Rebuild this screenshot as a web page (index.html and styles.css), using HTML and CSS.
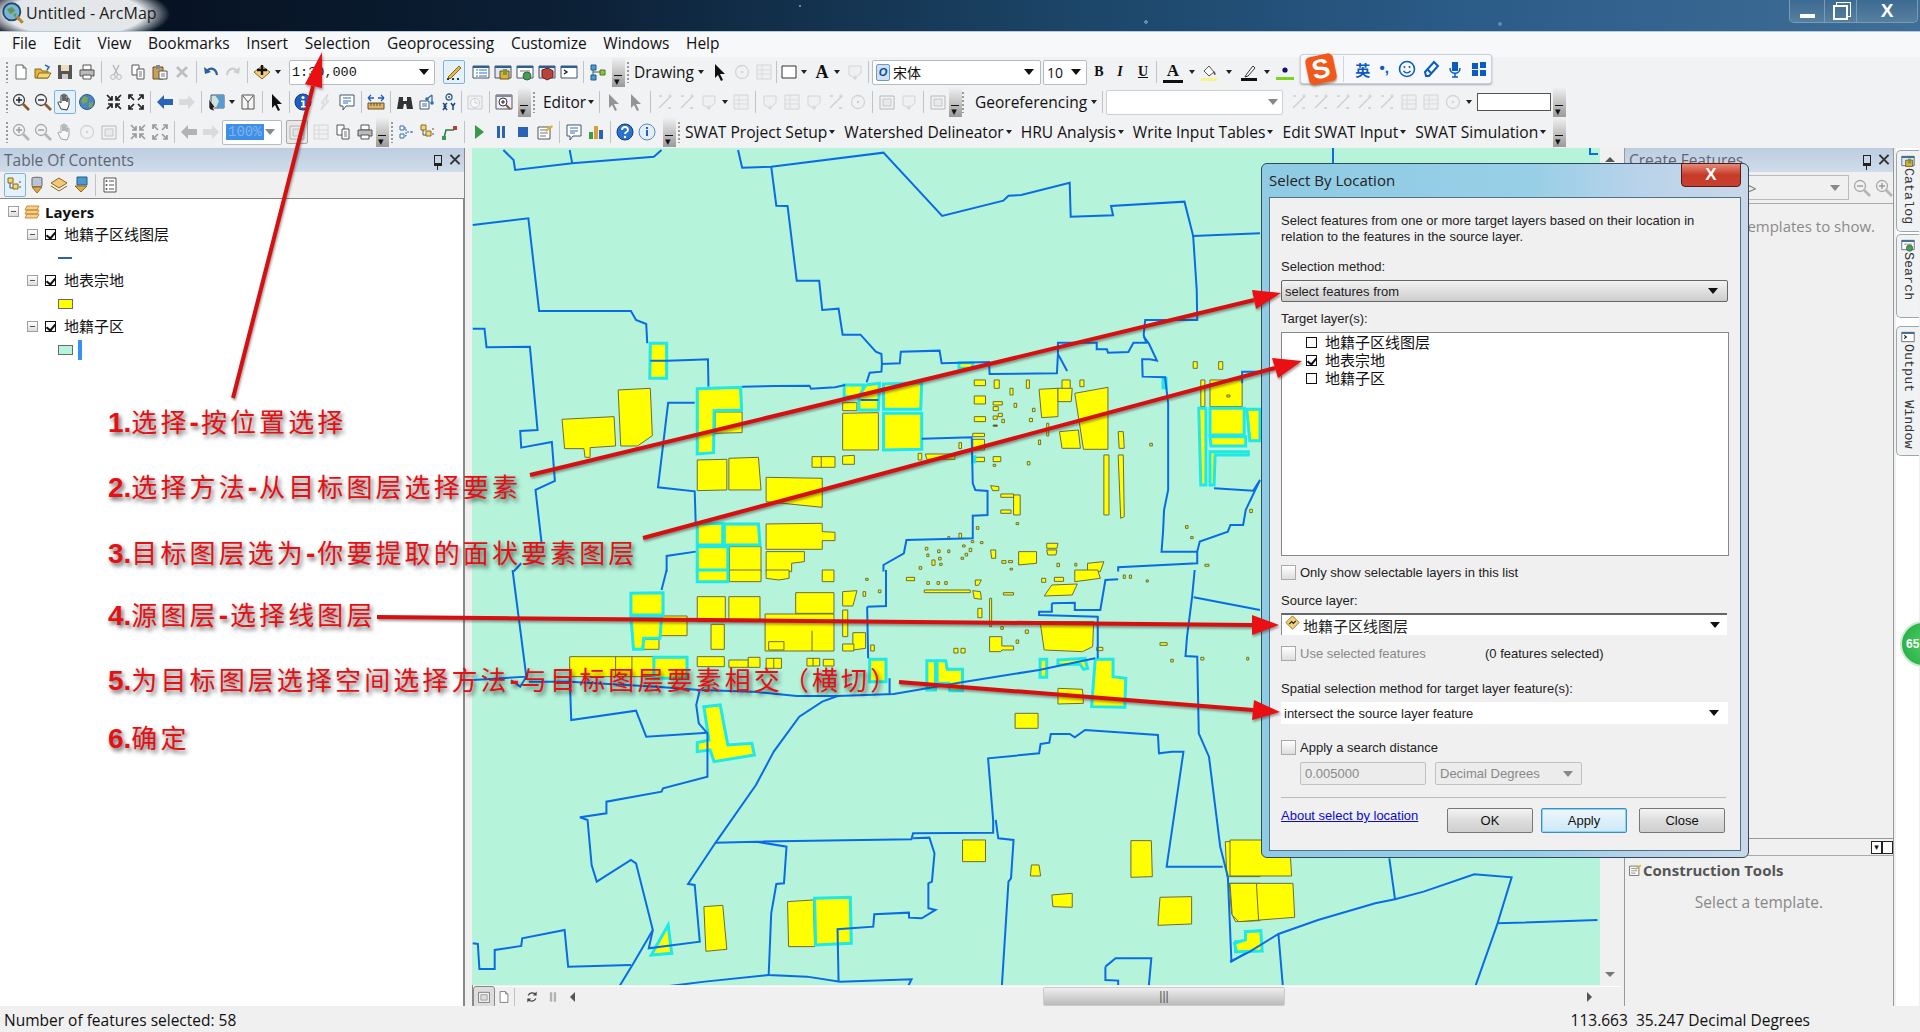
FILE: index.html
```html
<!DOCTYPE html>
<html lang="zh-CN">
<head>
  <meta charset="UTF-8">
  <title>Untitled - ArcMap</title>
  <link rel="stylesheet" href="styles.css">
</head>
<body>
  <svg class="defs" width="0" height="0">
    <symbol id="new" viewBox="0 0 18 18"><path d="M4 2h7l3 3v11H4z" fill="#fff" stroke="#666"/><path d="M11 2v3h3" fill="#ddd" stroke="#666"/></symbol>
    <symbol id="open" viewBox="0 0 18 18"><path d="M1 6h6l1 2h6v7H1z" fill="#e2b53c" stroke="#8a6a1c"/><path d="M3 15l2-5h12l-3 5z" fill="#f6d873" stroke="#8a6a1c"/><path d="M11 2l4 2-2 3" fill="none" stroke="#2d6fb8" stroke-width="1.5"/></symbol>
    <symbol id="save" viewBox="0 0 18 18"><path d="M2 2h14v14H2z" fill="#555"/><path d="M5 2h8v6H5z" fill="#eadfb8"/><path d="M6 11h6v5H6z" fill="#ccc"/></symbol>
    <symbol id="print" viewBox="0 0 18 18"><path d="M5 2h8v5H5z" fill="#fff" stroke="#555"/><path d="M2 7h14v6H2z" fill="#bbb" stroke="#555"/><path d="M5 12h8v4H5z" fill="#fff" stroke="#555"/></symbol>
    <symbol id="cut" viewBox="0 0 18 18"><path d="M6 2l5 10M12 2L7 12" stroke="#666" stroke-width="1.4" fill="none"/><circle cx="6" cy="14" r="2.4" fill="none" stroke="#666"/><circle cx="12" cy="14" r="2.4" fill="none" stroke="#666"/></symbol>
    <symbol id="copy" viewBox="0 0 18 18"><path d="M3 2h7v10H3z" fill="#fff" stroke="#555"/><path d="M8 6h7v10H8z" fill="#fff" stroke="#555"/><path d="M10 9h3M10 11h3M10 13h3" stroke="#777"/></symbol>
    <symbol id="paste" viewBox="0 0 18 18"><path d="M2 4h10v12H2z" fill="#c9a05a" stroke="#6d5020"/><path d="M5 2h4v4H5z" fill="#888"/><path d="M8 8h8v8H8z" fill="#fff" stroke="#555"/><path d="M10 11h4M10 13h4" stroke="#777"/></symbol>
    <symbol id="del" viewBox="0 0 18 18"><path d="M4 4l10 10M14 4L4 14" stroke="#777" stroke-width="2.6"/></symbol>
    <symbol id="undo" viewBox="0 0 18 18"><path d="M5 8c3-4 9-3 10 4" fill="none" stroke="#2a5f9e" stroke-width="2.2"/><path d="M2 4l1 7 6-2z" fill="#2a5f9e"/></symbol>
    <symbol id="redo" viewBox="0 0 18 18"><path d="M13 8C10 4 4 5 3 12" fill="none" stroke="#999" stroke-width="2.2"/><path d="M16 4l-1 7-6-2z" fill="#999"/></symbol>
    <symbol id="add" viewBox="0 0 18 18"><path d="M9 3l8 6-8 7-8-7z" fill="#f2cf78" stroke="#8a6a1c"/><path d="M9 2v10M4 7h10" stroke="#111" stroke-width="2.4"/></symbol>
    <symbol id="edit" viewBox="0 0 18 18"><path d="M3 14L14 3l2 2L5 16z" fill="#e8b34a" stroke="#8a6a1c"/><path d="M2 16h14" stroke="#333" stroke-dasharray="2 3" stroke-width="2"/></symbol>
    <symbol id="tbl" viewBox="0 0 18 18"><path d="M1 3h16v12H1z" fill="#fff" stroke="#456"/><path d="M1 3h16v2H1z" fill="#2e5f92"/><path d="M4 7h2M4 10h2M4 13h2M7 7h8M7 10h8M7 13h8" stroke="#2e6fb8"/></symbol>
    <symbol id="catalog" viewBox="0 0 18 18"><path d="M1 3h16v12H1z" fill="#dfe8f2" stroke="#456"/><path d="M1 3h16v2H1z" fill="#2e5f92"/><path d="M6 8h9v8H6z" fill="#d9b23a" stroke="#6d5020"/><path d="M9 6h4v6H9z" fill="#7a9a3a"/></symbol>
    <symbol id="srch" viewBox="0 0 18 18"><path d="M1 3h16v12H1z" fill="#fff" stroke="#456"/><path d="M1 3h16v2H1z" fill="#2e5f92"/><path d="M4 7h10v2H4z" fill="#bbb"/><circle cx="11" cy="13" r="4" fill="#4a9a5a" stroke="#2a6a3a"/></symbol>
    <symbol id="box" viewBox="0 0 18 18"><path d="M1 3h16v12H1z" fill="#dfe8f2" stroke="#456"/><path d="M1 3h16v2H1z" fill="#2e5f92"/><path d="M4 7l6-2 5 3v6l-6 3-5-3z" fill="#b5453a" stroke="#6d201a"/></symbol>
    <symbol id="py" viewBox="0 0 18 18"><path d="M1 3h16v12H1z" fill="#fff" stroke="#456"/><path d="M1 3h16v2H1z" fill="#2e5f92"/><path d="M4 7l3 2-3 2" fill="none" stroke="#111" stroke-width="1.3"/></symbol>
    <symbol id="model" viewBox="0 0 18 18"><path d="M4 5v9M4 9h9" stroke="#456"/><path d="M2 2h5v5H2zM2 12h5v5H2z" fill="#4b9bd6" stroke="#1c5f92"/><path d="M11 7h5v5h-5z" fill="#8fc04a" stroke="#4a7a1c"/></symbol>
    <symbol id="zin" viewBox="0 0 18 18"><circle cx="7" cy="7" r="5.5" fill="#eef3f8" stroke="#444" stroke-width="1.3"/><path d="M4 7h6M7 4v6" stroke="#222" stroke-width="1.4"/><path d="M11 11l6 6" stroke="#8a5a2a" stroke-width="2.6"/></symbol>
    <symbol id="zout" viewBox="0 0 18 18"><circle cx="7" cy="7" r="5.5" fill="#eef3f8" stroke="#444" stroke-width="1.3"/><path d="M4 7h6" stroke="#222" stroke-width="1.4"/><path d="M11 11l6 6" stroke="#8a5a2a" stroke-width="2.6"/></symbol>
    <symbol id="hand" viewBox="0 0 18 18"><path d="M5 16L2 10c0-2 2-1 3 0V3c0-1.400 2-1.400 2 0v5-6c0-1.400 2-1.400 2 0v6-5c0-1.400 2-1.400 2 0v6-3c0-1.400 2-1.400 2 0v6l-2 5z" fill="#fff" stroke="#333"/></symbol>
    <symbol id="globe" viewBox="0 0 18 18"><circle cx="9" cy="9" r="7.5" fill="#4a86c6" stroke="#2a5a8e"/><path d="M6 3l4 2-1 4-4 2-2-3zM11 10l4-1-1 5-3 1z" fill="#7fa84a"/></symbol>
    <symbol id="fin" viewBox="0 0 18 18"><path d="M2 2l5 5M7 3v4H3M16 2l-5 5M11 3v4h4M2 16l5-5M7 15v-4H3M16 16l-5-5M11 15v-4h4" fill="none" stroke="#222" stroke-width="1.7"/></symbol>
    <symbol id="fout" viewBox="0 0 18 18"><path d="M7 7L2 2M2 6V2h4M11 7l5-5M16 6V2h-4M7 11l-5 5M2 12v4h4M11 11l5 5M16 12v4h-4" fill="none" stroke="#222" stroke-width="1.7"/></symbol>
    <symbol id="back" viewBox="0 0 18 18"><path d="M1 9l7-7v4h9v6H8v4z" fill="#2a62b8"/></symbol>
    <symbol id="fwd" viewBox="0 0 18 18"><path d="M17 9l-7-7v4H1v6h9v4z" fill="#b8b8b8"/></symbol>
    <symbol id="sel" viewBox="0 0 18 18"><path d="M4 2h13v13H4z" fill="#cfe4d8" stroke="#456"/><path d="M8 2l4 6-3 7h8V2z" fill="#5a9ad0"/><path d="M2 6l6 8-2 1 2 3-4-1-2-2z" fill="#222" stroke="#fff" stroke-width=".6"/></symbol>
    <symbol id="clr" viewBox="0 0 18 18"><path d="M3 2h12v14H3z" fill="#f4f4f4" stroke="#555"/><path d="M4 3l5 6 5-6M9 9v7" fill="none" stroke="#555"/></symbol>
    <symbol id="arrow" viewBox="0 0 18 18"><path d="M4 1l10 10-5 0 3 6-2 1-3-6-3 3z" fill="#111"/></symbol>
    <symbol id="info" viewBox="0 0 18 18"><circle cx="9" cy="9" r="8" fill="#1f5fc0" stroke="#0e3a80"/><circle cx="9" cy="4.500" r="1.600" fill="#fff"/><path d="M7 7.500h3.500V13H12v1.500H7V13h1.500V9H7z" fill="#fff"/></symbol>
    <symbol id="bolt" viewBox="0 0 18 18"><path d="M12 1L5 10h3l-3 7 8-9h-3z" fill="#ddd" stroke="#aaa"/></symbol>
    <symbol id="popup" viewBox="0 0 18 18"><path d="M2 2h14v11H8l-3 4v-4H2z" fill="#fff" stroke="#456"/><path d="M5 5h8M5 8h8M5 10h5" stroke="#2e6fb8"/></symbol>
    <symbol id="ruler" viewBox="0 0 18 18"><path d="M1 10h16v6H1z" fill="#d9b76a" stroke="#6d5020"/><path d="M4 10v3M7 10v3M10 10v3M13 10v3" stroke="#6d5020"/><path d="M1 5h6M1 5l3-3M1 5l3 3M17 5h-6M17 5l-3-3M17 5l-3 3" fill="none" stroke="#1f5fc0" stroke-width="1.300"/></symbol>
    <symbol id="binoc" viewBox="0 0 18 18"><path d="M3 4h4v4h4V4h4l2 12h-6l-1-5H8l-1 5H1z" fill="#333"/></symbol>
    <symbol id="route" viewBox="0 0 18 18"><path d="M2 8h9v8H2z" fill="#fff" stroke="#456"/><path d="M4 11h5M4 13h5" stroke="#2e6fb8"/><path d="M10 5l4-3M14 2v8" stroke="#2e6fb8" fill="none" stroke-width="1.300"/><circle cx="14" cy="10" r="1.800" fill="#2e6fb8"/><circle cx="9" cy="6" r="1.800" fill="#2e6fb8"/></symbol>
    <symbol id="xy" viewBox="0 0 18 18"><circle cx="9" cy="4" r="3" fill="none" stroke="#2e5f92" stroke-width="1.300"/><circle cx="9" cy="4" r="1" fill="#2e5f92"/><path d="M3 10l3 3-3 4M7 10l-3 3 3 4M11 10l2 3 2-3M13 13v4" fill="none" stroke="#1f4a80" stroke-width="1.500"/></symbol>
    <symbol id="clock" viewBox="0 0 18 18"><path d="M2 3h14v13H2z" fill="#eee" stroke="#999"/><circle cx="9" cy="10" r="4.500" fill="#fff" stroke="#999"/><path d="M9 7v3h3" fill="none" stroke="#999"/></symbol>
    <symbol id="zwin" viewBox="0 0 18 18"><path d="M1 2h16v14H1z" fill="#eef" stroke="#555"/><path d="M1 2h16v2H1z" fill="#889"/><circle cx="8" cy="9" r="4" fill="#fff" stroke="#333"/><path d="M6 9h4M8 7v4" stroke="#222"/><path d="M11 12l4 4" stroke="#8a5a2a" stroke-width="2"/></symbol>
    <symbol id="pts" viewBox="0 0 18 18"><path d="M3 15L15 3M3 3h3M12 15h3" stroke="#999" stroke-width="1.300" fill="none"/><path d="M12 3h4M14 1v4" stroke="#aaa"/></symbol>
    <symbol id="poly" viewBox="0 0 18 18"><path d="M3 3h12v7l-6 5-6-3z" fill="#eee" stroke="#aaa"/><path d="M9 12v5M7 15h4" stroke="#aaa"/></symbol>
    <symbol id="grid" viewBox="0 0 18 18"><path d="M2 2h14v14H2z" fill="#eee" stroke="#aaa"/><path d="M2 7h14M2 11h14M7 2v14" stroke="#bbb"/></symbol>
    <symbol id="doc" viewBox="0 0 18 18"><path d="M2 3h14v13H2z" fill="#f4f4f4" stroke="#666"/><path d="M5 6h8v7H5z" fill="#ddd" stroke="#888"/></symbol>
    <symbol id="rot" viewBox="0 0 18 18"><circle cx="9" cy="9" r="6.500" fill="none" stroke="#aaa" stroke-width="1.300"/><circle cx="9" cy="9" r="1.300" fill="#aaa"/></symbol>
    <symbol id="refresh" viewBox="0 0 18 18"><path d="M14 6a6 6 0 0 0-10 1M4 12a6 6 0 0 0 10-1" fill="none" stroke="#444" stroke-width="1.500"/><path d="M15 2v5h-5zM3 16v-5h5z" fill="#444"/></symbol>
    <symbol id="rect" viewBox="0 0 18 18"><path d="M2 3h14v12H2z" fill="#fff" stroke="#333"/></symbol>
    <symbol id="fill" viewBox="0 0 18 18"><path d="M4 8l5-5 5 6-5 4z" fill="#fff" stroke="#555"/><path d="M14 8c2 2 2 4 1 4s-2-2-1-4z" fill="#6a4a2a"/><path d="M1 15h16v3H1z" fill="#f4f48a"/></symbol>
    <symbol id="pen" viewBox="0 0 18 18"><path d="M6 12l7-9 2 2-7 8-3 1z" fill="#fff" stroke="#333"/><path d="M1 15h16v3H1z" fill="#111"/></symbol>
    <symbol id="lineclr" viewBox="0 0 18 18"><circle cx="9" cy="7" r="2.600" fill="#10106e"/><path d="M0 14h18v3H0z" fill="#7ed321"/></symbol>
    <symbol id="play" viewBox="0 0 18 18"><path d="M5 2l9 7-9 7z" fill="#3a9a4a"/></symbol>
    <symbol id="pause" viewBox="0 0 18 18"><path d="M5 3h3v12H5zM10 3h3v12h-3z" fill="#2a62b8"/></symbol>
    <symbol id="stop" viewBox="0 0 18 18"><path d="M4 4h10v10H4z" fill="#2a62b8"/></symbol>
    <symbol id="form" viewBox="0 0 18 18"><path d="M2 4h12v12H2z" fill="#fff" stroke="#555"/><path d="M4 7h8M4 10h8M4 13h6" stroke="#777"/><path d="M9 7l7-5 1 2-7 5z" fill="#d9b23a"/></symbol>
    <symbol id="bars" viewBox="0 0 18 18"><path d="M2 9h4v7H2z" fill="#3a9a4a"/><path d="M7 3h4v13H7z" fill="#d9a03a"/><path d="M12 7h4v9h-4z" fill="#2a62b8"/></symbol>
    <symbol id="help" viewBox="0 0 18 18"><circle cx="9" cy="9" r="8" fill="#2a72d0" stroke="#0e3a80"/><path d="M6 7c0-4 6-4 6 0 0 2-3 2-3 4" fill="none" stroke="#fff" stroke-width="1.800"/><circle cx="9" cy="14" r="1.200" fill="#fff"/></symbol>
    <symbol id="infol" viewBox="0 0 18 18"><circle cx="9" cy="9" r="8" fill="#e4eef8" stroke="#5a8ac0"/><path d="M8 7h2v6H8zM8 4h2v2H8z" fill="#2a62b8"/></symbol>
    <symbol id="treeh" viewBox="0 0 18 18"><path d="M3 3h4v4H3zM3 11h4v4H3z" fill="#fff" stroke="#2e6fb8"/><path d="M10 9h5M15 8v2M7 5h2v8H7" fill="none" stroke="#2e6fb8" stroke-dasharray="2 1"/></symbol>
    <symbol id="treey" viewBox="0 0 18 18"><path d="M2 2h5v5H2zM7 8h5v5H7z" fill="#f0d878" stroke="#8a6a1c"/><path d="M4 7v5h3M14 5v2M14 10v2" fill="none" stroke="#555"/></symbol>
    <symbol id="lnk" viewBox="0 0 18 18"><path d="M3 15l2-8h8" fill="none" stroke="#2a7a4a" stroke-width="1.500"/><path d="M1 13h4v4H1z" fill="#3a9a4a"/><path d="M12 3h4v4h-4z" fill="#c03a2a"/></symbol>
    <symbol id="tsrc" viewBox="0 0 18 18"><path d="M4 2c0-1 10-1 10 0v8c0 1-10 1-10 0z" fill="#b8c4d0" stroke="#667"/><path d="M4 11h10l-5 6z" fill="#e0a84a" stroke="#8a6a1c"/></symbol>
    <symbol id="tstack" viewBox="0 0 18 18"><path d="M9 2l8 5-8 5-8-5z" fill="#f2c878" stroke="#8a6a1c"/><path d="M1 10l8 5 8-5" fill="none" stroke="#8a6a1c"/></symbol>
    <symbol id="tvis" viewBox="0 0 18 18"><path d="M5 1h10v8H5z" fill="#4a9ad0" stroke="#1c5f92"/><path d="M3 10h12l-6 6z" fill="#e0a84a" stroke="#8a6a1c"/></symbol>
    <symbol id="topt" viewBox="0 0 18 18"><path d="M3 2h12v14H3z" fill="#fff" stroke="#555"/><path d="M8 5h5M8 9h5M8 13h5" stroke="#555"/><circle cx="5.500" cy="5" r="1" fill="#555"/><circle cx="5.500" cy="9" r="1" fill="#555"/><circle cx="5.500" cy="13" r="1" fill="#555"/></symbol>
    <symbol id="layers" viewBox="0 0 18 18"><path d="M4 3h12l-2 4H2zM4 7h12l-2 4H2zM4 11h12l-2 4H2z" fill="#f4d28a" stroke="#c8893a"/></symbol>
  </svg>

  <header class="titlebar">
    <svg class="app-ic" viewBox="0 0 18 18"><circle cx="8" cy="8" r="7" fill="#7db2d8" stroke="#1f4a70" stroke-width="1.500"/><path d="M4 6l4-2 3 3-4 3zM9 10l3-1-1 4z" fill="#5f9a4a"/><path d="M12 12l5 5" stroke="#b8862a" stroke-width="2.500"/></svg>
    <span class="app-title">Untitled - ArcMap</span>
    <div class="winbtns">
      <span class="wb wb-min"></span>
      <span class="wb wb-max"></span>
      <span class="wb wb-close">X</span>
    </div>
  </header>

  <nav class="menu">
    <span>File</span><span>Edit</span><span>View</span><span>Bookmarks</span><span>Insert</span><span>Selection</span><span>Geoprocessing</span><span>Customize</span><span>Windows</span><span>Help</span>
  </nav>

  <!-- toolbars -->
  <div class="tb">
    <section class="seg s-std">
      <i class="grip"></i>
      <svg class="ic"><use href="#new"/></svg><svg class="ic"><use href="#open"/></svg><svg class="ic"><use href="#save"/></svg><svg class="ic"><use href="#print"/></svg>
      <i class="sep"></i>
      <svg class="ic off"><use href="#cut"/></svg><svg class="ic"><use href="#copy"/></svg><svg class="ic"><use href="#paste"/></svg><svg class="ic off"><use href="#del"/></svg>
      <i class="sep"></i>
      <svg class="ic"><use href="#undo"/></svg><svg class="ic off"><use href="#redo"/></svg>
      <i class="sep"></i>
      <svg class="ic"><use href="#add"/></svg><i class="caret"></i>
      <div class="combo c-scale"><span>1:30,000</span><i class="tri"></i></div>
      <span class="toggle m8"><svg class="ic"><use href="#edit"/></svg></span>
      <svg class="ic m5"><use href="#tbl"/></svg><svg class="ic"><use href="#catalog"/></svg><svg class="ic"><use href="#srch"/></svg><svg class="ic"><use href="#box"/></svg><svg class="ic"><use href="#py"/></svg>
      <i class="sep"></i>
      <svg class="ic"><use href="#model"/></svg>
      <i class="more"></i>
    </section>
    <section class="seg s-draw">
      <i class="grip"></i>
      <span class="tbtext t-drawing">Drawing</span><i class="caret"></i>
      <svg class="ic m3"><use href="#arrow"/></svg><svg class="ic off"><use href="#rot"/></svg><svg class="ic off"><use href="#grid"/></svg>
      <i class="sep s4"></i>
      <svg class="ic n"><use href="#rect"/></svg><i class="caret"></i>
      <b class="ltr m3">A</b><i class="caret"></i>
      <svg class="ic n m3 off"><use href="#poly"/></svg>
      <i class="sep"></i>
      <div class="combo c-font"><span class="font-o">O</span><span class="cjk">宋体</span><i class="tri"></i></div>
      <div class="combo c-size"><span>10</span><i class="tri"></i></div>
      <b class="ltr n2 m2">B</b><b class="ltr n2 it">I</b><b class="ltr n2 ul m3">U</b>
      <i class="sep"></i>
      <b class="ltr n2 ul2 m3">A</b><i class="caret m4"></i>
      <svg class="ic n m2"><use href="#fill"/></svg><i class="caret m5"></i>
      <svg class="ic n m5"><use href="#pen"/></svg><i class="caret m3"></i>
      <svg class="ic n m3"><use href="#lineclr"/></svg>
    </section>
  </div>

  <div class="tb">
    <section class="seg s-std2">
      <i class="grip"></i>
      <svg class="ic"><use href="#zin"/></svg><svg class="ic"><use href="#zout"/></svg><span class="toggle tg0"><svg class="ic"><use href="#hand"/></svg></span><svg class="ic"><use href="#globe"/></svg>
      <svg class="ic m5"><use href="#fin"/></svg><svg class="ic"><use href="#fout"/></svg>
      <i class="sep"></i>
      <svg class="ic"><use href="#back"/></svg><svg class="ic off"><use href="#fwd"/></svg>
      <i class="sep"></i>
      <svg class="ic"><use href="#sel"/></svg><i class="caret"></i><svg class="ic"><use href="#clr"/></svg>
      <i class="sep"></i>
      <svg class="ic"><use href="#arrow"/></svg>
      <i class="sep s4"></i>
      <svg class="ic"><use href="#info"/></svg><svg class="ic off"><use href="#bolt"/></svg><svg class="ic"><use href="#popup"/></svg>
      <i class="sep"></i>
      <svg class="ic"><use href="#ruler"/></svg>
      <i class="sep"></i>
      <svg class="ic"><use href="#binoc"/></svg><svg class="ic"><use href="#route"/></svg><svg class="ic"><use href="#xy"/></svg>
      <i class="sep s4"></i>
      <svg class="ic off"><use href="#clock"/></svg>
      <i class="sep"></i>
      <svg class="ic"><use href="#zwin"/></svg>
      <i class="more"></i>
    </section>
    <section class="seg s-edit">
      <i class="grip"></i>
      <span class="tbtext t-editor">Editor</span><i class="caret"></i>
      <i class="sep"></i>
      <svg class="ic off"><use href="#arrow"/></svg><svg class="ic off"><use href="#arrow"/></svg>
      <i class="sep"></i>
      <svg class="ic off"><use href="#pts"/></svg><svg class="ic off"><use href="#pts"/></svg><svg class="ic off"><use href="#poly"/></svg><i class="caret"></i><svg class="ic off"><use href="#grid"/></svg>
      <i class="sep"></i>
      <svg class="ic off"><use href="#poly"/></svg><svg class="ic off"><use href="#grid"/></svg><svg class="ic off"><use href="#poly"/></svg><svg class="ic off"><use href="#pts"/></svg><svg class="ic off"><use href="#rot"/></svg>
      <i class="sep"></i>
      <svg class="ic off"><use href="#doc"/></svg><svg class="ic off"><use href="#poly"/></svg>
      <i class="sep"></i>
      <svg class="ic off"><use href="#doc"/></svg>
      <i class="more"></i>
    </section>
    <section class="seg s-geo">
      <i class="grip"></i>
      <span class="tbtext t-geo">Georeferencing</span><i class="caret"></i>
      <i class="sep"></i>
      <div class="combo c-georef"><i class="tri gray"></i></div>
      <svg class="ic m5 off"><use href="#pts"/></svg><svg class="ic off"><use href="#pts"/></svg><svg class="ic off"><use href="#pts"/></svg><svg class="ic off"><use href="#pts"/></svg><svg class="ic off"><use href="#pts"/></svg><svg class="ic off"><use href="#grid"/></svg><svg class="ic off"><use href="#grid"/></svg><svg class="ic off"><use href="#rot"/></svg><i class="caret"></i>
      <span class="geo-input"></span>
      <i class="more"></i>
    </section>
  </div>

  <div class="tb">
    <section class="seg s-std3">
      <i class="grip"></i>
      <svg class="ic off"><use href="#zin"/></svg><svg class="ic off"><use href="#zout"/></svg><svg class="ic off"><use href="#hand"/></svg><svg class="ic off"><use href="#rot"/></svg><svg class="ic off"><use href="#doc"/></svg>
      <i class="sep"></i>
      <svg class="ic off"><use href="#fin"/></svg><svg class="ic off"><use href="#fout"/></svg>
      <i class="sep"></i>
      <svg class="ic off"><use href="#back"/></svg><svg class="ic off"><use href="#fwd"/></svg>
      <div class="combo c-pct"><span class="pct">100%</span><i class="tri gray"></i></div>
      <span class="toggle tg1"><svg class="ic off"><use href="#doc"/></svg></span>
      <svg class="ic off"><use href="#grid"/></svg><svg class="ic"><use href="#copy"/></svg><svg class="ic"><use href="#print"/></svg>
      <i class="more"></i>
    </section>
    <section class="seg s-swat">
      <i class="grip"></i>
      <svg class="ic"><use href="#treeh"/></svg><svg class="ic"><use href="#treey"/></svg><svg class="ic"><use href="#lnk"/></svg>
      <i class="sep"></i>
      <svg class="ic"><use href="#play"/></svg><svg class="ic"><use href="#pause"/></svg><svg class="ic"><use href="#stop"/></svg><svg class="ic"><use href="#form"/></svg>
      <i class="sep"></i>
      <svg class="ic"><use href="#popup"/></svg><svg class="ic"><use href="#bars"/></svg>
      <i class="sep"></i>
      <svg class="ic"><use href="#help"/></svg><svg class="ic"><use href="#infol"/></svg>
      <i class="more"></i>
    </section>
    <section class="seg s-menus">
      <i class="grip"></i>
      <span class="tbtext t-swat">SWAT Project Setup</span><i class="caret"></i>
      <span class="tbtext t-swat">Watershed Delineator</span><i class="caret"></i>
      <span class="tbtext t-swat">HRU Analysis</span><i class="caret"></i>
      <span class="tbtext t-swat">Write Input Tables</span><i class="caret"></i>
      <span class="tbtext t-swat">Edit SWAT Input</span><i class="caret"></i>
      <span class="tbtext t-swat">SWAT Simulation</span><i class="caret"></i>
      <i class="more"></i>
    </section>
  </div>

  <main class="main">
    <aside class="toc">
      <div class="dock-head"><span>Table Of Contents</span><i class="pin"></i><i class="dock-x"></i></div>
      <div class="toc-tools">
        <span class="toggle tg2"><svg class="ic"><use href="#treey"/></svg></span><svg class="ic"><use href="#tsrc"/></svg><svg class="ic"><use href="#tstack"/></svg><svg class="ic"><use href="#tvis"/></svg><i class="sep"></i><svg class="ic"><use href="#topt"/></svg>
      </div>
      <div class="tree">
        <div class="row root"><i class="tog"></i><svg class="ic lay"><use href="#layers"/></svg><b class="root-name">Layers</b></div>
        <div class="row"><i class="tog"></i><i class="ck on"></i><span>地籍子区线图层</span></div>
        <div class="legend"><i class="lg-line"></i></div>
        <div class="row"><i class="tog"></i><i class="ck on"></i><span>地表宗地</span></div>
        <div class="legend"><i class="lg-rect yellow"></i></div>
        <div class="row"><i class="tog"></i><i class="ck on"></i><span>地籍子区</span></div>
        <div class="legend"><i class="lg-rect mint"></i><i class="lg-bar"></i></div>
      </div>
    </aside>

    <div class="mapcol">
      <div class="maprow">
        <svg class="map" viewBox="472 148 1128 837">
          <rect x="472" y="148" width="1128" height="837" fill="#b5f3da"/>
          <!-- top half of the sheet -->
          <g transform="translate(460 150) scale(.5102 .3333)">
            <g class="lot">
              <path d="M200 808L302 800 305 888 255 893 255 922 245 922 243 896 205 896z"/>
              <path d="M310 720L373 715 377 857 348 888 315 888z"/>
              <path d="M465 930L523 928 523 1020 465 1022z"/><path d="M527 925L585 922 590 1020 527 1020z"/>
              <path d="M600 982L710 985 710 1072 600 1055z"/>
              <path d="M600 1122L710 1120 710 1145 735 1147 735 1172 710 1172 710 1198 600 1198z"/>
              <path d="M600 1205L675 1205 675 1235 650 1240 650 1265 600 1265z"/>
              <path d="M690 920H735V952H690zM708 920V952"/><path d="M750 918L773 916 773 943 750 943z"/>
              <path d="M750 790L820 788 820 900 750 900z"/><path d="M750 758H778V782H750z"/>
              <path d="M500 786H553V848L500 850z"/>
              <path d="M528 1190H590V1265H528z"/>
              <path d="M1135 718L1172 715 1172 800 1140 803z"/><path d="M1172 715H1200L1198 755H1172z"/>
              <path d="M1205 730L1270 712 1270 898 1222 898z"/>
              <path d="M1175 845L1212 840 1216 895 1180 895z"/>
              <path d="M1290 845H1300L1302 895 1292 895z"/><path d="M1262 915H1272V1095H1262z"/><path d="M1290 915H1300L1302 1100 1295 1105z"/>
              <path d="M1452 690H1460V770H1452z"/><path d="M1470 690H1533V770H1470z"/>
              <path d="M1008 690H1030V707H1008zM1047 690H1057V715H1047zM1110 690H1116V715H1110zM1180 690H1196V715H1180zM1215 690H1223V710H1215zM1008 738H1030V762H1008zM1008 800H1030V815H1008zM1005 850H1028V860H1005zM1005 868H1028V900H1005zM898 910H905V930H898zM912 912H970V928H915zM1010 922H1028V935H1010zM1045 920H1060V935H1045zM1040 1007L1056 1010 1056 1022 1044 1022zM1060 1032H1085V1042H1060zM1085 1035H1098V1095H1085zM1060 1080H1080V1090H1060zM1095 1205H1130V1240L1095 1245zM1150 1180H1172L1170 1195H1150zM1150 1200H1170L1168 1215H1152zM1040 1200H1050V1225H1042zM1230 1240L1262 1235 1255 1265H1230zM1437 635H1445V655H1437zM1487 635H1495V658H1487z"/>
              <path d="M1078 715h6v20h-6zM1045 755h18v10h-18zM1045 770h10v12h-10zM1086 760h5v12h-5zM1122 775h5v10h-5zM1045 798h8v10h-8zM1055 790h8v10h-8zM1062 808h5v10h-5zM1116 805h6v10h-6zM1150 820h4v38h-4zM1134 870h4v14h-4zM978 878h5v18h-5zM1352 880h5v8h-5zM1112 935h5v10h-5zM1045 943h5v6h-5zM1012 1130h5v8h-5zM1090 1118h5v6h-5zM1422 1127h5v8h-5zM1432 1160h5v6h-5zM1548 1078h5v10h-5zM1503 735h6v6h-6zM912 1192h5v8h-5zM936 1200h5v8h-5zM956 1200h4v8h-4zM915 1212h4v8h-4zM978 1150h5v16h-5zM956 1160h4v8h-4zM1002 1172h5v6h-5zM985 1185h5v6h-5zM998 1195h5v10h-5zM990 1210h5v8h-5zM982 1222h5v6h-5zM1020 1175h5v6h-5zM925 1230h6v16h-6zM938 1222h5v8h-5zM940 1240h5v6h-5zM900 1250h5v8h-5zM1062 1232h8v8h-8zM1075 1232h8v6h-8zM1078 1255h5v5h-5zM1170 1240h5v10h-5zM1205 1240h4v8h-4zM1460 1243h8v6h-8z"/>
              <path d="M1045 825h8v4h-8z" class="dot"/>
            </g>
            <g class="lot sel">
              <path d="M373 580H405V685H372z"/>
              <path d="M465 716L550 712 552 780 498 782 497 908 465 912z"/>
              <path d="M753 705H790V740H753z"/><path d="M795 705L822 700 820 780H782V740z"/>
              <path d="M830 702L905 698 903 778H830z"/><path d="M830 790H905V898L830 900z"/>
              <path d="M978 638H1005V655H978z"/>
              <path d="M465 1122L515 1120 515 1185H465z"/><path d="M518 1122H585L588 1185H518z"/>
              <path d="M465 1190H525V1265H465z"/>
              <path d="M1448 775H1462V1005H1452z"/><path d="M1470 775H1537V855H1470z"/><path d="M1470 860H1540V888H1472z"/>
              <path d="M1470 905H1545V915H1480L1478 1005H1470z"/><path d="M1542 778H1568V872H1548z"/>
              <path d="M1378 685h6v28h-6zM1005 920h4v15h-4z"/>
            </g>
            <g class="line">
              <path d="M85 0L105 30 108 60 220 40 380 20 395 0M215 0L220 40"/>
              <path d="M545 0L553 53 610 50 830 8 945 198 1065 152 1075 137 1100 135 1195 98 1197 200 1280 196 1276 168 1420 155 1430 215 1437 258 1568 250"/>
              <path d="M610 50L620 167 642 168 660 392 704 392 710 480 742 476 750 554 785 554 815 605 826 612 827 642 862 640 864 605 940 602 944 640 1037 636 1038 672 1170 670 1172 612"/>
              <path d="M827 642L826 665 803 668 797 697M25 225L134 205 155 483 335 483 345 510 365 522 367 580"/>
              <path d="M1437 258L1444 420 1445 510 1343 510 1340 555 1345 578 1320 578 1310 606 1270 608 1268 598 1248 598 1248 578 1172 578 1172 612 1190 663"/>
              <path d="M1340 560L1350 580 1366 632 1352 628 1337 628 1338 680 1382 682 1388 760 1388 1020 1380 1080 1378 1145 1375 1205 1445 1205"/>
              <path d="M25 536H48L52 592 137 590 152 840 118 843 120 893 180 876 186 993 148 1020 160 1180"/>
              <path d="M373 632H405L450 630 486 628 487 710M553 710L620 708 685 707 688 716 735 712 755 705"/>
              <path d="M460 758H408L388 1012 460 1024 462 1120M785 750H820"/>
              <path d="M905 866L1003 862 1005 1000 1010 1020 1034 1023 1034 1095 1005 1097 1005 1165 875 1170 870 1210 830 1245 830 1265"/>
              <path d="M405 1265V1218L462 1205M105 1265L120 1240M1568 665H1533V700"/>
              <path d="M1568 990L1540 1080 1535 1125 1510 1125 1505 1145 1450 1175 1445 1205 1445 1240 1290 1252 1290 1265M1478 1015L1555 1022 1568 990"/>
            </g>
          </g>
          <!-- lower half -->
          <g transform="translate(460 570) scale(.5102 .3333)">
            <g class="lot">
              <path d="M395 138H445V197H392z"/><path d="M360 208H390V238H360z"/>
              <path d="M215 260H380V320H215zM305 260V320M337 260V320"/>
              <path d="M465 80H520V155H465z"/><path d="M527 80H588V155H527z"/><path d="M492 163H518V238H492z"/>
              <path d="M465 260H518V290H465z"/><path d="M527 270H565V292H527z"/><path d="M565 262H588V292H565z"/><path d="M600 265H630V295H600zM615 265V295"/>
              <path d="M658 68H733V130H658z"/><path d="M598 132H733V243H598zM690 182V243M605 215H635V240H605z"/>
              <path d="M710 0H733V35H710z"/><path d="M600 0H645V25L625 30 600 25z"/><path d="M528 0H590V35H528z"/>
              <path d="M750 120H760V200H750z"/><path d="M770 188H795V235L770 240z"/><path d="M750 222H772V243H750z"/><path d="M750 65L778 62 775 80 770 108H750z"/>
              <path d="M680 265H705V288H680zM692 265V288"/><path d="M712 268H733V288H712z"/>
              <path d="M1137 155H1242L1240 230 1220 245 1145 240z"/><path d="M1172 355L1220 358 1222 400 1172 402z"/>
              <path d="M1088 430H1133V475H1088z"/><path d="M1038 200H1062V228H1085V240H1062L1060 245H1038z"/>
              <path d="M985 810H1030V875H985z"/><path d="M1120 885H1135L1138 918H1118z"/><path d="M1315 812H1355L1357 920 1315 922z"/>
              <path d="M1160 975L1200 970 1200 1012 1162 1010z"/><path d="M1372 982L1434 980 1434 1062 1368 1066z"/>
              <path d="M478 1010L515 1006 523 1138 482 1144z"/><path d="M642 995L693 990 695 1130 644 1130z"/>
              <path d="M1500 815H1568V920H1503z"/><path d="M1508 940H1568V1052L1520 1055 1512 1030z"/>
              <path d="M1205 0H1250L1255 25 1205 35z"/><path d="M1160 45L1210 42 1200 75 1145 78z"/>
              <path d="M910 60H1000V68H910zM1005 62L1020 65 1022 88 1008 85zM1065 68H1085V75H1065zM1038 85h4V170h-4zM875 22h16v10h-16zM1010 30h12l-6 16h-6zM1140 25h8v12h-8zM1165 22h18v12h-18zM968 235h8v14h-8zM982 235h8v14h-8zM1108 180h6v10h-6zM1090 210h5v10h-5zM1248 232h12v10h-12zM1372 218h14v8h-14zM1393 268h5v8h-5zM1452 262h6v8h-6zM1542 262h4v8h-4zM1060 170h5v8h-5zM1015 115h8v28h-8zM790 65h5v14h-5zM820 60h5v8h-5zM795 25h5v6h-5zM915 35h5v8h-5zM935 35h5v8h-5zM950 35h5v8h-5zM1345 30h4v6h-4zM1300 15h4v10h-4zM1312 15h4v10h-4zM805 225h7v18h-7z"/>
            </g>
            <g class="lot sel">
              <path d="M335 70L398 68V135H335z"/><path d="M335 140H395L392 205H360L358 238H340z"/>
              <path d="M380 262H445V325H380z"/><path d="M465 0H525V35H465z"/>
              <path d="M803 268H835V335H803z"/><path d="M915 272H932V360H915z"/><path d="M935 272H952L955 298H985V362H960L958 340H935z"/>
              <path d="M1137 268H1150V322H1137z"/><path d="M1172 270L1225 265 1230 295 1222 298 1215 282 1172 285z"/>
              <path d="M1245 268H1280V320L1305 325 1303 412 1238 410z"/>
              <path d="M695 985L765 982 767 1120 697 1125z"/><path d="M408 1065L415 1150 375 1155z"/>
              <path d="M478 410L510 405 525 525 572 520 577 555 498 575 490 540 465 545 465 518 488 510z"/>
              <path d="M1520 1115L1545 1112 1540 1085H1568V1140L1520 1145z"/>
            </g>
            <g class="line">
              <path d="M103 0L130 320 25 330M130 320L118 350 100 330M405 0L395 60"/>
              <path d="M215 320L218 450 345 422 365 500 485 488"/>
              <path d="M135 335H215L385 350 470 360 575 365 660 378H740L850 372 990 335 1135 300 1165 290 1245 265"/>
              <path d="M470 360L463 405 468 460 485 490 485 620 398 655 395 665 287 695 287 730 235 742 250 750 258 885 268 935 335 870 345 880 378 1080 370 1135 470 1115 460 945 447 942 500 820 580 645 615 545 665 440 710 395 740 378"/>
              <path d="M378 1080L340 1180 312 1250M500 818L580 815 640 830 635 940 620 942 610 1030 605 1215 680 1220 745 1235 885 1228 878 1250"/>
              <path d="M580 815L885 808 888 790 1045 788 1045 750 1035 565 1135 550 1138 522 1155 518 1158 492 1195 492 1205 502 1225 480 1368 495 1370 550 1395 545 1418 545 1385 890 1495 890"/>
              <path d="M888 805L920 803 930 850 925 935 918 940 918 1015 932 1020 905 1045 880 1043 880 1028 812 1033 810 1070 740 1078 742 1235"/>
              <path d="M1050 750L1055 805 1085 810 1080 925 1075 935 1062 1250"/>
              <path d="M25 1120L35 1122 38 1197H68V1140L120 1128 122 1105 205 1080 212 1190 335 1185M400 1250L480 1235 605 1215"/>
              <path d="M1265 1190L1285 1165H1355L1350 1250M1265 1190V1230L1290 1232V1250"/>
              <path d="M1440 0L1435 80 1425 200 1422 258 1445 260 1448 490 1468 560 1490 830 1505 920 1512 1175 1568 1125M1438 82L1568 120"/>
              <path d="M798 110L835 108V0M798 110L800 265M1160 100L1205 98 1205 120 1255 120 1265 30 1290 28M1160 100V125H1135V135L1250 140V265M842 372V325"/>
            </g>
          </g>
          <!-- bottom right corner, below the dialog -->
          <g transform="translate(1230 840) scale(.4401 .3333)">
            <g class="lot">
              <path d="M0 0H135L140 108H0z"/><path d="M0 130H143L147 232 20 245 5 225zM60 130L65 240"/>
            </g>
            <g class="lot sel"><path d="M10 310L35 300V275L70 272 73 333 15 335z"/></g>
            <g class="line">
              <path d="M0 365L45 335 110 282 200 240 330 190 375 178 440 155 555 103 640 112 608 250 835 240M608 250L558 437M110 282L120 437M362 55L375 178"/>
            </g>
          </g>
          <path class="line" d="M1333 148V165M1590 148V154H1598"/>
        </svg>
        <div class="vscroll"><i class="v-up"></i><i class="v-dn"></i></div>
      </div>
      <div class="hscroll">
        <div class="view-btns">
          <span class="toggle tg3"><svg class="ic xs"><use href="#doc"/></svg></span><svg class="ic xs"><use href="#new"/></svg><i class="sep"></i><svg class="ic xs"><use href="#refresh"/></svg><svg class="ic xs gap3 off"><use href="#pause"/></svg><i class="h-left"></i>
        </div>
        <div class="h-thumb"><span>|||</span></div>
        <i class="h-right"></i>
      </div>
    </div>

    <aside class="create">
      <div class="dock-head"><span>Create Features</span><i class="pin"></i><i class="dock-x"></i></div>
      <div class="create-tools">
        <div class="cf-combo"><span>&lt;Search&gt;</span><i class="tri gray"></i></div>
        <svg class="ic off"><use href="#zout"/></svg><svg class="ic off"><use href="#zin"/></svg>
      </div>
      <div class="cf-body">emplates to show.</div>
      <div class="cf-split"><i class="chev"></i><i></i></div>
      <div class="cf-tools">
        <div class="cf-title"><svg class="ic xs"><use href="#form"/></svg><b>Construction Tools</b></div>
        <p>Select a template.</p>
      </div>
    </aside>

    <div class="dockbar">
      <div class="tab t1"><svg class="ic xs"><use href="#catalog"/></svg><span>Catalog</span></div>
      <div class="tab t2"><svg class="ic xs"><use href="#srch"/></svg><span>Search</span></div>
      <div class="tab t3"><svg class="ic xs"><use href="#py"/></svg><span>Output Window</span></div>
    </div>
  </main>

  <footer class="status">
    <span>Number of features selected: 58</span>
    <span class="coords">113.663&nbsp;&nbsp;35.247 Decimal Degrees</span>
  </footer>

  <!-- floating bits -->
  <div class="badge">65</div>

  <div class="sogou">
    <b class="sg-logo">S</b>
    <i class="sg-sep"></i>
    <b class="sg-t">英</b>
    <span class="sg-p">•,</span>
    <svg class="sg-ic" viewBox="0 0 18 18"><circle cx="9" cy="9" r="7.500" fill="none" stroke="#0a5cc2" stroke-width="1.600"/><circle cx="6.500" cy="7" r="1" fill="#0a5cc2"/><circle cx="11.500" cy="7" r="1" fill="#0a5cc2"/><path d="M5.500 11c2 2.500 5 2.500 7 0" fill="none" stroke="#0a5cc2" stroke-width="1.400"/></svg>
    <svg class="sg-ic" viewBox="0 0 18 18"><path d="M3 12L12 2l4 4-9 10H4z" fill="none" stroke="#0a5cc2" stroke-width="2"/><path d="M5 9l4 4" stroke="#0a5cc2" stroke-width="2"/></svg>
    <svg class="sg-ic" viewBox="0 0 18 18"><path d="M6 2h6v9H6z" fill="#0a5cc2"/><path d="M4 8c0 7 10 7 10 0M9 13v4M6 17h6" fill="none" stroke="#0a5cc2" stroke-width="1.500"/></svg>
    <svg class="sg-ic" viewBox="0 0 18 18"><path d="M2 3h6v6H2zM2 10h6v6H2zM10 10h6v6h-6z" fill="#0a5cc2"/><path d="M10 2h6v6h-6z" fill="#0a5cc2"/></svg>
  </div>

  <div class="dlg">
    <div class="dlg-head">Select By Location</div>
    <span class="dlg-x">X</span>
    <div class="dlg-body">
      <p class="intro">Select features from one or more target layers based on their location in relation to the features in the source layer.</p>
      <label class="lb lb-method">Selection method:</label>
      <div class="dcombo grad"><span>select features from</span><i class="tri"></i></div>
      <label class="lb lb-target">Target layer(s):</label>
      <div class="listbox">
        <div class="li"><i class="ck"></i><span>地籍子区线图层</span></div>
        <div class="li"><i class="ck on"></i><span>地表宗地</span></div>
        <div class="li"><i class="ck"></i><span>地籍子区</span></div>
      </div>
      <div class="opt o-only"><i class="cbx"></i><span>Only show selectable layers in this list</span></div>
      <label class="lb lb-src">Source layer:</label>
      <div class="dcombo sunk">
        <svg class="src-ic" viewBox="0 0 18 18"><path d="M9 1l8 8-8 8-8-8z" fill="#f2cf78" stroke="#8a6a1c"/><path d="M5 11l3-3 2 2 3-3" fill="none" stroke="#222" stroke-width="1.400"/></svg>
        <span class="cjk">地籍子区线图层</span><i class="tri boxed"></i>
      </div>
      <div class="opt o-use"><i class="cbx"></i><span class="dim w-use">Use selected features</span><span>(0 features selected)</span></div>
      <label class="lb lb-spatial">Spatial selection method for target layer feature(s):</label>
      <div class="dcombo plain"><span>intersect the source layer feature</span><i class="tri"></i></div>
      <div class="opt o-apply"><i class="cbx"></i><span>Apply a search distance</span></div>
      <div class="dist">
        <span class="field">0.005000</span>
        <span class="field unit">Decimal Degrees<i class="tri gray"></i></span>
      </div>
      <hr class="rule">
      <div class="actions">
        <a class="about" href="#">About select by location</a>
        <button class="btn">OK</button>
        <button class="btn def">Apply</button>
        <button class="btn last">Close</button>
      </div>
    </div>
  </div>

  <ol class="notes">
    <li><b>1.</b>选择<b class="hy">-</b>按位置选择</li>
    <li><b>2.</b>选择方法<b class="hy">-</b>从目标图层选择要素</li>
    <li><b>3.</b>目标图层选为<b class="hy">-</b>你要提取的面状要素图层</li>
    <li><b>4.</b>源图层<b class="hy">-</b>选择线图层</li>
    <li><b>5.</b>为目标图层选择空间选择方法<b class="hy">-</b>与目标图层要素相交（横切）</li>
    <li><b>6.</b>确定</li>
  </ol>

  <svg class="arrows" viewBox="0 0 1920 1032">
    <path d="M233 398L313 86M530 475L1254 300M643 538L1275 368M377 617L1252 625M899 682L1253 710"/>
    <polygon points="322,52 322,88 305,84"/>
    <polygon points="1281,293 1252,290 1256,309"/>
    <polygon points="1302,361 1272,358 1278,378"/>
    <polygon points="1279,625 1252,615 1252,635"/>
    <polygon points="1280,712 1254,700 1252,720"/>
  </svg>
</body>
</html>
```

FILE: styles.css
```css
* { box-sizing: border-box; }
html, body { margin: 0; height: 1032px; overflow: hidden; }
body { position: relative; background: #f3f4f6; color: #111; font-family: "Open Sans", "Noto Sans CJK SC", sans-serif; }
i { display: block; font-style: normal; }
.defs { position: absolute; }

/* title bar */
.titlebar {
  height: 32px; display: flex; align-items: center; padding-bottom: 5px; position: relative;
  border-bottom: 1px solid #b8cbd8;
  background:
    radial-gradient(ellipse 95px 30px at 75px 14px, rgba(235,238,240,.97) 72%, rgba(235,238,240,0) 100%),
    radial-gradient(circle 1px at 800px 6px, #5a8ab0 99%, transparent),
    radial-gradient(circle 2px at 1146px 22px, #5a8ab0 99%, transparent),
    radial-gradient(circle 2px at 1500px 24px, #5a8ab0 99%, transparent),
    linear-gradient(90deg, #050d1c 0, #0c2036 30%, #1b4466 55%, #2a5a86 75%, #3f6e98 100%);
}
.app-ic { width: 22px; height: 22px; margin-left: 2px; }
.app-title { margin-left: 2px; font-size: 16px; color: #1c1c1c; }
.winbtns { position: absolute; right: 2px; top: 0; width: 129px; height: 23px; display: flex; border: 1px solid #7d9ab4; border-top: 0; border-radius: 0 0 5px 5px; background: linear-gradient(#3d6a92, #56809f); }
.wb { height: 100%; width: 36px; border-right: 1px solid #7d9ab4; display: flex; align-items: center; justify-content: center; }
.wb-max { width: 32px; }
.wb-close { width: 61px; border: 0; color: #fff; font: bold 19px "Liberation Sans", sans-serif; }
.wb-min::after { content: ""; width: 15px; height: 4px; margin-top: 9px; background: #fff; }
.wb-max::after { content: ""; width: 11px; height: 11px; margin-top: 2px; border: 2px solid #fff; box-shadow: 3px -3px 0 -1px #4a7396, 3px -3px 0 0 #fff; }

/* menu */
.menu { height: 25px; display: flex; align-items: center; padding: 0 0 3px 12px; font-size: 15.500px; background: #f7f8f9; }
.menu span { margin-right: 16.700px; }

/* toolbars */
.tb { height: 30px; display: flex; background: #f1f2f4; }
.seg { display: flex; align-items: center; height: 100%; }
.s-std { width: 625px; padding-left: 4px; }
.s-draw { width: 690px; }
.s-std2 { width: 531px; padding-left: 4px; }
.s-edit { width: 429px; }
.s-geo { width: 606px; }
.s-std3 { width: 389px; padding-left: 4px; }
.s-swat { width: 287px; }
.s-menus { width: 890px; }
.grip { width: 6px; height: 22px; background: radial-gradient(circle 1px, #999 99%, transparent) 0 0 / 6px 4px; flex: none; }
.ic { width: 22px; height: 18px; flex: none; }
.ic.n { width: 20px; }
.ic.xs { width: 16px; height: 14px; }
.ic.off { filter: grayscale(1) opacity(.42); }
.sep { width: 1px; height: 22px; background: #bfc3c8; margin: 0 3px; flex: none; }
.sep.s4 { margin: 0 2px 0 1px; }
.caret { width: 10px; height: 4px; flex: none; position: relative; }
.caret::after { content: ""; position: absolute; left: 2px; top: 0; border: 3px solid transparent; border-top: 4px solid #222; }
.more { width: 13px; height: 100%; margin-left: auto; flex: none; background: linear-gradient(#f2f2f2, #9a9a9a); position: relative; }
.more::after { content: "\25BE"; position: absolute; left: 2px; bottom: 0; font: 11px/12px "DejaVu Sans", sans-serif; color: #111; border-top: 1px solid #111; height: 11px; width: 8px; }
.m2 { margin-left: 2px; } .m3 { margin-left: 3px; } .m4 { margin-left: 4px; } .m5 { margin-left: 5px; } .m8 { margin-left: 8px; }
.toggle { display: flex; align-items: center; justify-content: center; flex: none; width: 22px; height: 24px; border: 1px solid #7db4dc; background: #e4f0fa; border-radius: 2px; }
.tg2 { width: 22px; }
.tg1 { width: 22px; margin: 0 2px 0 4px; border-color: #aaa; background: #e8e8e8; }
.tg3 { border-color: #888; background: #ddd; width: 22px; height: 22px; border-radius: 3px; }
.tbtext { font-size: 15.500px; white-space: nowrap; }
.t-drawing { margin-left: 3px; width: 62px; }
.t-editor { margin-left: 6px; width: 48px; }
.t-geo { margin-left: 9px; width: 114px; }
.t-swat { margin-left: 7px; font-size: 15.600px; }
.t-swat:first-of-type { margin-left: 3px; }
.ltr { font: bold 18px "Liberation Serif", serif; width: 20px; text-align: center; flex: none; }
.n2 { font-size: 14px; }
.it { font-style: italic; margin-left: 1px; }
.ul { text-decoration: underline; }
.ul2 { font-size: 17px; border-bottom: 3px solid #111; line-height: 19px; }
.combo { display: flex; align-items: center; height: 25px; border: 1px solid #b5bcc4; background: #fff; font-size: 15px; padding-left: 3px; position: relative; flex: none; border-radius: 2px; }
.tri { display: block; width: 0; border: 5px solid transparent; border-top: 6px solid #111; border-bottom: 0; margin-left: auto; flex: none; }
.tri.gray { border-top-color: #888; }
.c-scale { width: 146px; margin-left: 6px; padding: 0 5px 0 2px; font-family: "Liberation Mono", monospace; font-size: 13.500px; }
.c-font { width: 169px; padding-right: 6px; }
.c-font .cjk { font-size: 14px; margin-left: 3px; }
.font-o { width: 14px; height: 17px; background: #cfe0f0; border: 1px solid #6f9ac4; color: #0b4b90; font: italic bold 11px/15px "Liberation Sans", sans-serif; text-align: center; border-radius: 2px; }
.c-size { width: 44px; margin-left: 2px; padding-right: 5px; font-size: 14px; }
.c-georef { width: 177px; border-color: #d0d0d0; padding-right: 4px; }
.geo-input { width: 74px; height: 18px; margin-left: 3px; background: #fff; border: 1px solid #555; flex: none; }
.c-pct { width: 60px; padding-right: 6px; }
.pct { background: #3f8ee8; color: #7fb4ee; font-size: 14px; padding: 0 2px; font-family: "Liberation Mono", monospace; }

/* main area */
.main { height: 859px; display: flex; padding-top: 1px; background: #f0f0f0; }
.toc { width: 465px; display: flex; flex-direction: column; border-right: 1px solid #888; flex: none; }
.dock-head { height: 24px; display: flex; align-items: center; background: linear-gradient(#bdcde0, #d0dcea); color: #5c6672; font-size: 15.500px; padding-left: 4px; flex: none; }
.pin { margin-left: auto; width: 8px; height: 11px; border: 1px solid #222; border-bottom-width: 3px; position: relative; }
.pin::after { content: ""; position: absolute; left: 2px; top: 9px; width: 1px; height: 5px; background: #222; }
.dock-x { width: 16px; height: 16px; margin: 0 1px 0 5px; position: relative; }
.dock-x::before, .dock-x::after { content: ""; position: absolute; left: 7px; top: 1px; width: 2px; height: 13px; background: #333; transform: rotate(45deg); }
.dock-x::after { transform: rotate(-45deg); }
.toc-tools { height: 26px; display: flex; align-items: center; padding-left: 4px; flex: none; }
.tree { flex: 1; background: #fff; border: 1px solid #888; border-width: 1px 1px 0 0; font-size: 15px; padding-top: 1px; }
.row { height: 23px; display: flex; align-items: center; padding-left: 27px; }
.row span { margin-left: 8px; line-height: 1; }
.root { padding-left: 8px; height: 21px; margin: 1px 0; }
.root .tog { margin-right: 4px; }
.lay { width: 18px; }
.root-name { margin-left: 4px; }
.tog { width: 11px; height: 11px; border: 1px solid #a0a0a0; background: linear-gradient(#fff, #dcdcdc); position: relative; margin-right: 7px; flex: none; }
.tog::after { content: ""; position: absolute; left: 2px; top: 4px; width: 5px; height: 1px; background: #555; }
.ck { width: 11px; height: 11px; border: 1px solid #111; background: #fff; position: relative; flex: none; }
.ck.on::after { content: ""; position: absolute; left: 2px; top: 0; width: 4px; height: 7px; border: solid #111; border-width: 0 2px 2px 0; transform: rotate(40deg); }
.legend { height: 23px; display: flex; align-items: center; padding-left: 58px; }
.lg-line { width: 14px; height: 2px; background: #2a62b8; }
.lg-rect { width: 15px; height: 10px; border: 1px solid #6b6b6b; }
.yellow { background: #ff0; }
.mint { background: #b5f3da; }
.lg-bar { width: 4px; height: 20px; margin-left: 5px; background: #3a90f0; }

.mapcol { width: 1148px; margin-left: 7px; flex: none; border-left: 1px solid #888; display: flex; flex-direction: column; }
.maprow { display: flex; height: 838px; flex: none; }
.map { width: 1128px; height: 837px; display: block; flex: none; margin-left: -1px; }
.lot path { fill: #ff0; stroke: #6c6c3e; stroke-width: 1; vector-effect: non-scaling-stroke; }
.lot.sel path { stroke: #1de8ec; stroke-width: 3; }
.lot .dot { fill: #444; }
.line path, path.line { fill: none; stroke: #0a6ce4; stroke-width: 2; vector-effect: non-scaling-stroke; }
.vscroll { width: 20px; display: flex; flex-direction: column; align-items: center; justify-content: space-between; padding: 9px 0; }
.v-up { border: 5px solid transparent; border-bottom: 5px solid #555; border-top: 0; }
.v-dn { border: 5px solid transparent; border-top: 5px solid #777; border-bottom: 0; }
.hscroll { height: 20px; display: flex; align-items: stretch; background: #f0f0f0; border-top: 1px solid #fff; width: 1148px; position: relative; flex: none; }
.view-btns { display: flex; align-items: center; width: 570px; flex: none; }
.view-btns .ic.xs { width: 18px; }
.view-btns .sep { height: 18px; margin: 0 8px 0 1px; }
.gap3 { margin-left: 3px; }
.h-left { border: 5px solid transparent; border-right: 5px solid #555; border-left: 0; margin-left: 8px; }
.h-thumb { width: 242px; background: linear-gradient(#eee, #bbb); border: 1px solid #ccc; border-radius: 2px; text-align: center; font: 12px/16px "Liberation Sans", sans-serif; color: #555; }
.h-right { border: 5px solid transparent; border-left: 5px solid #555; border-right: 0; align-self: center; margin-left: 302px; }

.create { width: 270px; margin-left: 4px; display: flex; flex-direction: column; flex: none; border-left: 1px solid #999; border-right: 1px solid #999; }
.create-tools { height: 31px; display: flex; align-items: center; flex: none; }
.cf-combo { width: 224px; height: 25px; display: flex; align-items: center; justify-content: space-between; border: 1px solid #bbb; padding: 0 8px 0 66px; color: #777; font-size: 15px; margin-right: 2px; flex: none; }
.cf-body { height: 636px; border-bottom: 1px solid #999; border-top: 1px solid #aaa; text-align: right; padding: 12px 18px 0 0; color: #8a8a8a; font-size: 15px; white-space: nowrap; flex: none; }
.cf-split { height: 17px; display: flex; justify-content: flex-end; align-items: center; flex: none; border-bottom: 1px solid #aaa; }
.cf-split i { width: 11px; height: 13px; border: 1px solid #222; background: #fff; }
.cf-split .chev { font: bold 9px/10px "DejaVu Sans", sans-serif; text-align: center; }
.cf-split .chev::after { content: "\25BE"; }
.cf-title { display: flex; align-items: center; height: 28px; padding-left: 2px; color: #555; font-size: 15px; }
.cf-tools p { margin: 5px 0 0; text-align: center; padding-top: 2px; color: #888; font-size: 15.500px; }

.dockbar { width: 23px; margin-left: 2px; flex: none; background: #fff; }
.tab { border: 1px solid #9aa; border-right: 0; border-radius: 5px 0 0 5px; background: #f0f2f4; display: flex; flex-direction: column; align-items: center; padding-top: 3px; }
.tab span { writing-mode: vertical-rl; font: 13.400px/18px "Liberation Mono", monospace; color: #333; }
.t1 { height: 82px; margin-top: 2px; }
.t2 { height: 84px; margin-top: 2px; }
.t3 { height: 130px; margin-top: 8px; }

.status { height: 26px; display: flex; align-items: center; padding: 2px 0 0 4px; font-size: 15.500px; background: #f0f0f0; position: relative; }
.coords { margin-left: auto; margin-right: 110px; }

/* overlays */
.badge { position: absolute; left: 1900px; top: 621px; width: 46px; height: 46px; border-radius: 50%; background: radial-gradient(circle at 60% 50%, #4fd06a, #22a83e); border: 2px solid #cfe8d4; color: #fff; font: bold 12px/42px "Liberation Sans", sans-serif; padding-left: 4px; }
.sogou { position: absolute; left: 1300px; top: 54px; width: 192px; height: 30px; background: #f6f8fb; border: 1px solid #c8d0da; border-radius: 3px; box-shadow: 0 1px 2px rgba(0,0,0,.3); display: flex; align-items: center; color: #0a5cc2; }
.sg-logo { width: 28px; height: 28px; margin-left: 6px; background: #f2581a; color: #fff; border-radius: 5px; transform: rotate(-12deg); font: bold 27px/28px "Liberation Sans", sans-serif; text-align: center; flex: none; box-shadow: 0 2px 2px rgba(120,60,20,.5); }
.sg-sep { width: 1px; height: 26px; background: #d0d6de; margin: 0 6px 0 8px; }
.sg-t { font-size: 15px; width: 24px; text-align: center; margin-left: 2px; }
.sg-p { width: 24px; text-align: center; font: bold 15px/1 "Liberation Sans", sans-serif; margin-bottom: 4px; }
.sg-ic { width: 18px; height: 18px; margin: 0 3px; flex: none; }

.dlg { position: absolute; left: 1261px; top: 163px; width: 488px; height: 695px; border: 1px solid #33485a; border-radius: 6px; padding: 0 7px 6px; background: linear-gradient(90deg, #8fcbe4 0, #97cfe6 55%, #b9d3ea 78%, #c8d8e8 100%); font: 13px "Liberation Sans", "Noto Sans CJK SC", sans-serif; color: #222; display: flex; flex-direction: column; }
.dlg-head { height: 33px; flex: none; font: 15px/32px "Open Sans", sans-serif; color: #222; }
.dlg-x { position: absolute; right: 7px; top: -1px; width: 60px; height: 24px; border: 1px solid #5a1a14; border-radius: 0 0 4px 4px; background: linear-gradient(#e68a78, #c73a28 50%, #c8402e); color: #fff; font: bold 17px/21px "Liberation Sans", sans-serif; text-align: center; }
.dlg-body { flex: 1; background: #f0f0f0; border: 1px solid #4d7188; padding: 0 11px; display: flex; flex-direction: column; }
.intro { margin: 15px 0 0; line-height: 16px; width: 440px; }
.lb { display: block; line-height: 14px; }
.lb-method { margin-top: 15px; }
.lb-target { margin-top: 10px; }
.lb-src { margin-top: 14px; }
.lb-spatial { margin-top: 21px; }
.dcombo { display: flex; align-items: center; height: 22px; padding: 0 9px 0 3px; margin-top: 6px; width: 447px; font-size: 13px; }
.grad { border: 1px solid #666; border-radius: 2px; background: linear-gradient(#f4f4f4, #ccc); }
.sunk { background: #fff; border-top: 2px solid #666; border-left: 1px solid #888; padding-left: 3px; width: 446px; margin-top: 5px; }
.sunk .cjk { font-size: 15px; margin-left: 3px; }
.plain { background: #fff; }
.tri.boxed { position: relative; margin-right: -2px; }
.src-ic { width: 15px; height: 15px; margin-top: -5px; }
.listbox { height: 224px; margin-top: 6px; width: 448px; background: #fff; border: 1px solid #888; padding-top: 0; }
.li { height: 18px; display: flex; align-items: center; padding-left: 24px; }
.li span { margin-left: 8px; font-size: 15px; line-height: 1; color: #111; }
.opt { display: flex; align-items: center; height: 15px; }
.cbx { width: 15px; height: 15px; border: 1px solid #aaa; background: linear-gradient(#fff, #ddd); margin-right: 4px; flex: none; }
.o-only { margin-top: 9px; }
.o-use { margin-top: 11px; }
.o-apply { margin-top: 16px; }
.dim { color: #888; }
.w-use { width: 185px; }
.dist { display: flex; margin: 7px 0 0 19px; }
.field { height: 23px; width: 126px; border: 1px solid #c0c0c0; background: #ececec; color: #888; line-height: 21px; padding-left: 4px; border-radius: 2px; display: flex; align-items: center; }
.unit { width: 147px; margin-left: 9px; padding-right: 8px; }
.rule { width: 445px; margin: 12px 0 0; border: 0; border-top: 1px solid #bbb; }
.actions { display: flex; margin-top: 10px; align-items: flex-start; width: 444px; }
.about { color: #0a0ad0; flex: 1; }
.btn { width: 86px; height: 25px; margin-left: 8px; border: 1px solid #777; border-radius: 2px; background: linear-gradient(#f4f4f4, #ddd 50%, #cfcfcf); font: 13px "Liberation Sans", sans-serif; color: #111; }
.btn.def { border: 1px solid #3c8fc4; box-shadow: inset 0 0 0 1px #8fd2f4; background: linear-gradient(#eef7fc, #cde8f8); }
.btn.last { margin-left: 12px; }

.notes { position: absolute; left: 108px; top: 390px; margin: 0; padding: 0; list-style: none; font-size: 26px; letter-spacing: 3.100px; color: #e60f14; text-shadow: 2px 3px 4px rgba(0,0,0,.6); font-family: "Noto Sans CJK SC", sans-serif; white-space: nowrap; }
.notes li { height: 62px; line-height: 62px; }
.notes b { font: bold 28px "Liberation Sans", sans-serif; letter-spacing: 0; }
.notes .hy { margin-right: 2px; }
.notes li:nth-child(2) { margin-top: 3px; }
.notes li:nth-child(3) { margin-top: 4px; }
.notes li:nth-child(5) { margin-top: 3px; }
.notes li:nth-child(6) { margin-top: -4px; }

.arrows { position: absolute; left: 0; top: 0; width: 1920px; height: 1032px; pointer-events: none; filter: drop-shadow(1px 2px 1px rgba(60,40,40,.45)); }
.arrows path { fill: none; stroke: #d60f10; stroke-width: 4; }
.arrows polygon { fill: #ea0f12; }
```
